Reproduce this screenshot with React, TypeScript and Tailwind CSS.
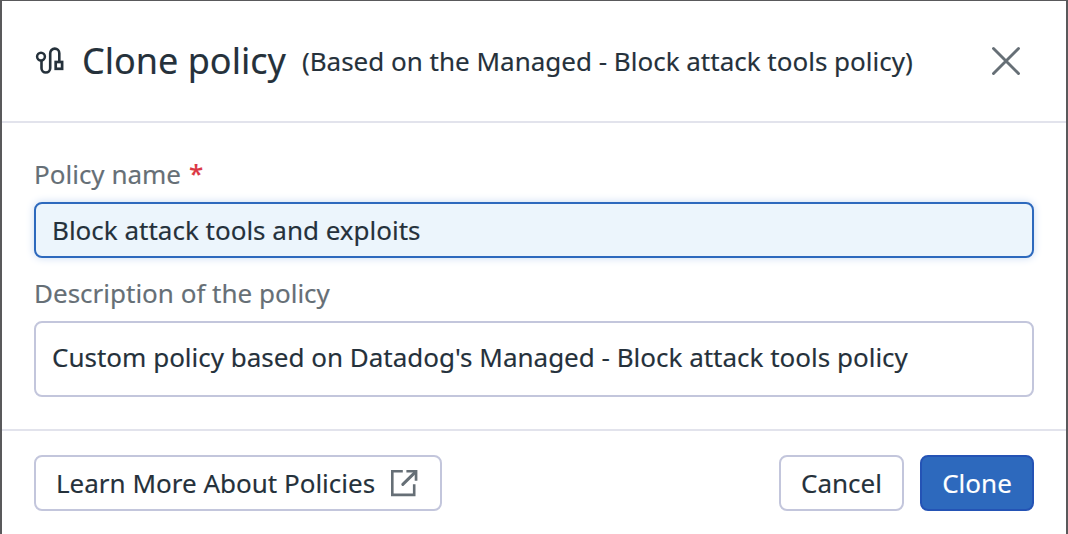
function RouteIcon() {
  return (
    <svg width="30" height="30" viewBox="0 0 30 30" fill="none" stroke="#25313b" strokeWidth="2.6" className="shrink-0">
      <circle cx="7" cy="10.6" r="3.9" strokeWidth="2.5" />
      <path d="M7.5 14.5v7.7a4.35 4.35 0 0 0 8.7 0V7.2a4.55 4.55 0 0 1 9.1 0V15" />
      <rect x="21.7" y="16" width="6.4" height="6.8" strokeWidth="2.7" />
    </svg>
  );
}

function CloseIcon() {
  return (
    <svg width="30" height="30" viewBox="0 0 30 30" fill="none" stroke="#666f76" strokeWidth="2.9" strokeLinecap="round">
      <path d="M2.5 2.5l25 25M27.5 2.5l-25 25" />
    </svg>
  );
}

function ExternalIcon() {
  return (
    <svg width="28" height="28" viewBox="0 0 28 28" fill="none" stroke="#666f76" strokeWidth="2.6">
      <path d="M12.8 2.3H2.3v23.6h21.9V15.2" />
      <path d="M12.8 15.4L24.8 3.6" strokeWidth="3" strokeLinecap="round" />
      <path d="M16.4 1H27.4v10.8h-2.7V5.2L23.4 3.6h-7z" fill="#666f76" stroke="none" />
    </svg>
  );
}

export default function App() {
  return (
    <div className="h-[534px] w-[1068px] overflow-hidden bg-[#59595b] px-[2px] pt-px font-['Noto_Sans',sans-serif] text-[26px] leading-9 text-[#25313b] [-webkit-text-stroke:0.15px]">
      <div className="flex h-[533px] flex-col bg-white">
        <header className="flex h-[122px] items-center border-b-2 border-[#e2e3ec] pr-[45px] pl-8">
          <RouteIcon />
          <h1 className="ml-[18px] text-[36px] leading-12 whitespace-nowrap">Clone policy</h1>
          <p className="ml-4 whitespace-nowrap">(Based on the Managed - Block attack tools policy)</p>
          <button aria-label="Close" className="ml-auto">
            <CloseIcon />
          </button>
        </header>
        <main className="flex h-[308px] flex-col border-b-2 border-[#e2e3ec] px-8 pt-[33px]">
          <div className="flex h-[46px] whitespace-nowrap text-[#666f76]">
            Policy name <span className="-mt-px ml-2 font-medium text-[#db3744]">*</span>
          </div>
          <div className="flex h-14 shrink-0 items-center rounded-lg border-2 border-[#2d69bd] bg-[#ecf5fc] px-4 whitespace-nowrap shadow-[0_0_8px_#c9daf2]">
            Block attack tools and exploits
          </div>
          <div className="mt-[17px] h-[46px] whitespace-nowrap text-[#666f76]">Description of the policy</div>
          <div className="flex h-[76px] shrink-0 items-center rounded-lg border-2 border-[#c3c6dc] px-4 pb-1 whitespace-nowrap">
            Custom policy based on Datadog's Managed - Block attack tools policy
          </div>
        </main>
        <footer className="flex items-center px-8 pt-6">
          <button className="flex h-14 w-[408px] items-center rounded-lg border-2 border-[#c3c6dc] pr-[22px] pl-5 whitespace-nowrap">
            Learn More About Policies
            <span className="ml-auto">
              <ExternalIcon />
            </span>
          </button>
          <button className="ml-auto flex h-14 w-[125px] items-center justify-center rounded-lg border-2 border-[#c3c6dc]">Cancel</button>
          <button className="ml-4 flex h-14 w-[114px] items-center justify-center rounded-lg border-2 border-[#2453b5] bg-[#2d69bd] text-white">Clone</button>
        </footer>
      </div>
    </div>
  );
}
